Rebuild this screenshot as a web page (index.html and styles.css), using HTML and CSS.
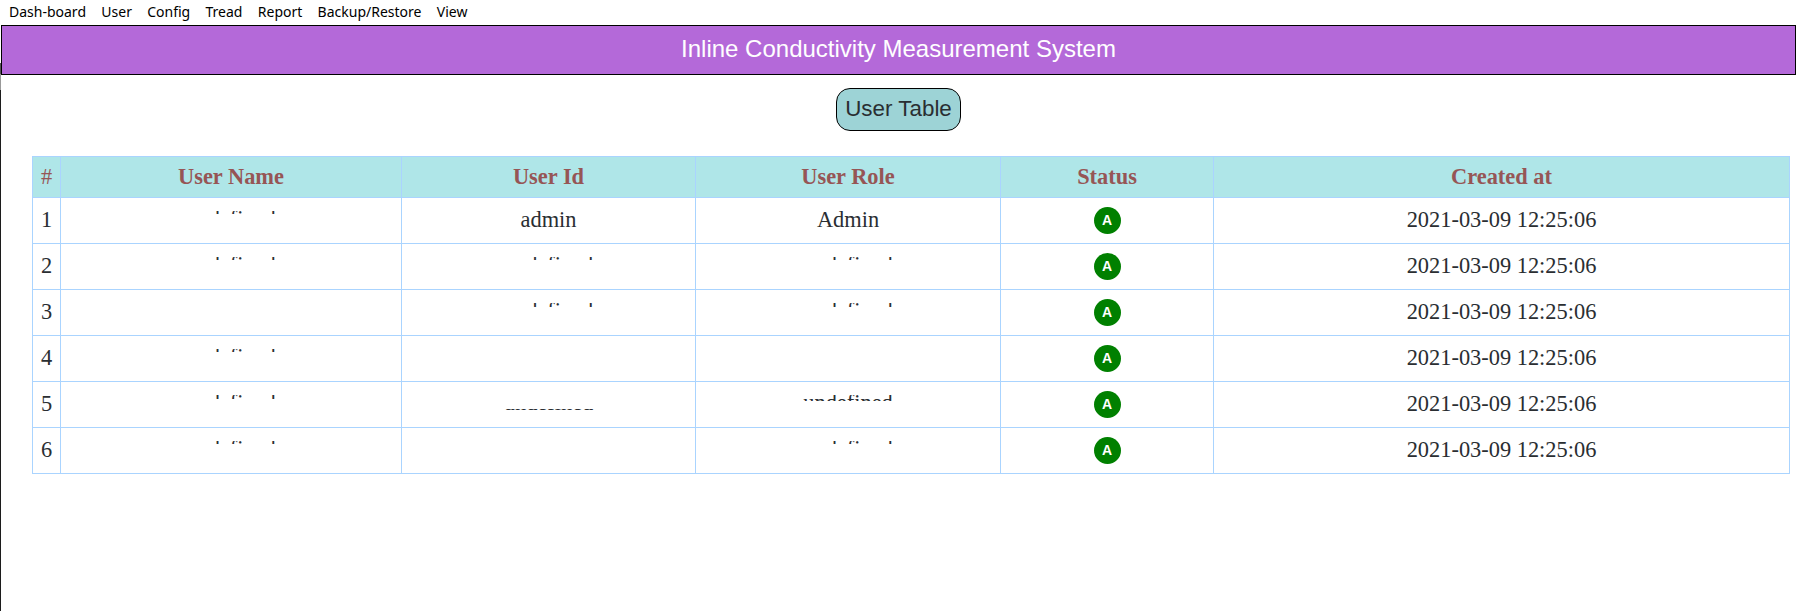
FILE: index.html
```html
<!DOCTYPE html>
<html lang="en">
<head>
<meta charset="utf-8">
<title>Inline Conductivity Measurement System</title>
<link rel="stylesheet" href="styles.css">
</head>
<body>
<nav class="menu">
  <span>Dash-board</span><span>User</span><span>Config</span><span>Tread</span><span>Report</span><span>Backup/Restore</span><span>View</span>
</nav>
<header class="banner">Inline Conductivity Measurement System</header>
<main>
  <div class="title-row"><h2 class="pill">User Table</h2></div>
  <table class="users">
    <colgroup>
      <col class="c-num"><col class="c-name"><col class="c-id"><col class="c-role"><col class="c-status"><col class="c-date">
    </colgroup>
    <thead>
      <tr><th class="hash">#</th><th>User Name</th><th>User Id</th><th>User Role</th><th>Status</th><th>Created at</th></tr>
    </thead>
    <tbody>
      <tr>
        <td>1</td>
        <td class="cutcell"><span class="cut cut-3"><span class="cut-text">undefined</span></span></td>
        <td>admin</td>
        <td>Admin</td>
        <td><span class="badge">A</span></td>
        <td>2021-03-09 12:25:06</td>
      </tr>
      <tr>
        <td>2</td>
        <td class="cutcell"><span class="cut cut-3"><span class="cut-text">undefined</span></span></td>
        <td class="cutcell"><span class="cut cut-3"><span class="cut-text">undefined</span></span></td>
        <td class="cutcell"><span class="cut cut-3"><span class="cut-text">undefined</span></span></td>
        <td><span class="badge">A</span></td>
        <td>2021-03-09 12:25:06</td>
      </tr>
      <tr>
        <td>3</td>
        <td></td>
        <td class="cutcell"><span class="cut cut-4"><span class="cut-text">undefined</span></span></td>
        <td class="cutcell"><span class="cut cut-4"><span class="cut-text">undefined</span></span></td>
        <td><span class="badge">A</span></td>
        <td>2021-03-09 12:25:06</td>
      </tr>
      <tr>
        <td>4</td>
        <td class="cutcell"><span class="cut cut-3"><span class="cut-text">undefined</span></span></td>
        <td></td>
        <td></td>
        <td><span class="badge">A</span></td>
        <td>2021-03-09 12:25:06</td>
      </tr>
      <tr>
        <td>5</td>
        <td class="cutcell"><span class="cut cut-4"><span class="cut-text">undefined</span></span></td>
        <td class="cutcell"><span class="cut cut-base"><span class="cut-text">undefined</span></span></td>
        <td class="cutcell"><span class="cut cut-6"><span class="cut-text">undefined</span></span></td>
        <td><span class="badge">A</span></td>
        <td>2021-03-09 12:25:06</td>
      </tr>
      <tr>
        <td>6</td>
        <td class="cutcell"><span class="cut cut-3"><span class="cut-text">undefined</span></span></td>
        <td></td>
        <td class="cutcell"><span class="cut cut-3"><span class="cut-text">undefined</span></span></td>
        <td><span class="badge">A</span></td>
        <td>2021-03-09 12:25:06</td>
      </tr>
    </tbody>
  </table>
</main>
</body>
</html>
```
FILE: styles.css
```css
* { box-sizing: border-box; }

html, body { height: 100%; }

body {
  margin: 0;
  overflow: hidden;
  background:
    linear-gradient(to bottom, #fff 0, #fff 63px, #555 63px, #555 74px, #999 74px, #999 90px, #1c1c1c 90px) left top / 1px 100% no-repeat,
    #fff;
  color: #2a2e32;
  font-family: "Liberation Serif", serif;
}

.menu {
  display: flex;
  gap: 15.3px;
  height: 25px;
  padding-left: 9px;
  padding-bottom: 2px;
  align-items: center;
  font-family: "Noto Sans", "Open Sans", sans-serif;
  font-size: 14px;
  color: #000;
}

.banner {
  display: flex;
  align-items: center;
  justify-content: center;
  height: 50px;
  margin-left: 1px;
  padding-bottom: 3px;
  border: 1px solid #000;
  border-width: 1.5px 1px;
  background: #b469d9;
  color: #fff;
  font-family: "Liberation Sans", sans-serif;
  font-size: 24px;
}

.title-row {
  display: flex;
  justify-content: center;
  padding-top: 13px;
  padding-left: 1px;
}

.pill {
  margin: 0;
  width: 125px;
  height: 43px;
  line-height: 39px;
  text-align: center;
  border: 1px solid #000;
  border-radius: 14px;
  background: #9dd3d6;
  color: #2a2e32;
  font-family: "Liberation Sans", sans-serif;
  font-size: 22.4px;
  font-weight: 400;
}

.users {
  table-layout: fixed;
  border-collapse: collapse;
  width: 1757px;
  margin: 25px 0 0 32px;
  font-size: 22.4px;
}

.c-num { width: 28px; }
.c-name { width: 341px; }
.c-id { width: 294px; }
.c-role { width: 305px; }
.c-status { width: 213px; }
.c-date { width: 576px; }

.users th,
.users td {
  border: 1px solid #aad4ff;
  padding: 0;
  text-align: center;
}

.users th {
  height: 41px;
  background: #afe6e8;
  color: #965555;
  font-weight: 700;
}

.users .hash { font-weight: 400; }

.users td {
  height: 46px;
  padding-bottom: 2px;
}

.users .cutcell { vertical-align: top; padding-bottom: 0; }

.cut {
  display: block;
  overflow: hidden;
  margin-top: 13px;
}

.cut-text {
  display: block;
  line-height: 26px;
  margin-top: -5px;
}

.cut-3 { height: 3px; }
.cut-4 { height: 4px; }
.cut-6 { height: 6px; }

.cut-base { height: 2px; margin-top: 27px; }
.cut-base .cut-text { margin-top: -19px; }

.badge {
  display: inline-flex;
  align-items: center;
  justify-content: center;
  width: 27px;
  height: 27px;
  border-radius: 50%;
  background: #008000;
  color: #fff;
  font-family: "Liberation Sans", sans-serif;
  font-size: 14px;
  font-weight: 700;
  vertical-align: middle;
}
```
